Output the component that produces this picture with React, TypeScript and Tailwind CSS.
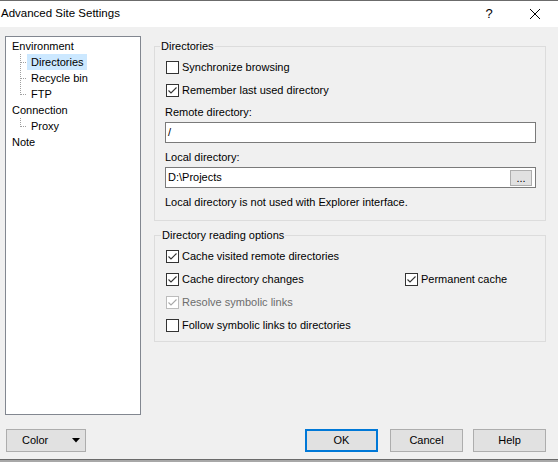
import React from 'react';

const font = { fontFamily: '"Liberation Sans", Arial, sans-serif' };

function CheckBox({ checked, disabled, label }: { checked?: boolean; disabled?: boolean; label: string }) {
  const edge = disabled ? 'border-[#bcbcbc]' : 'border-[#333333]';
  const mark = disabled ? '#a8a8a8' : '#333333';
  return (
    <div className="flex items-center h-[16px]">
      <span className={`ml-[1px] w-[13px] h-[13px] border ${edge} bg-white flex items-center justify-center shrink-0`}>
        {checked && (
          <svg width="11" height="11" viewBox="0 0 11 11">
            <path d="M1.5 5.5 L4 8 L9.5 2.5" fill="none" stroke={mark} strokeWidth="1.1" />
          </svg>
        )}
      </span>
      <span className={`ml-[3px] whitespace-nowrap ${disabled ? 'text-[#6d6d6d]' : 'text-black'}`}>{label}</span>
    </div>
  );
}

function Connector({ last }: { last?: boolean }) {
  return (
    <svg width="15" height="16" className="shrink-0" shapeRendering="crispEdges">
      <line x1="8.5" y1="0" x2="8.5" y2={last ? 8.5 : 16} stroke="#a0a0a0" strokeDasharray="1 1" />
      <line x1="9" y1="8.5" x2="15" y2="8.5" stroke="#a0a0a0" strokeDasharray="1 1" />
    </svg>
  );
}

function TreeChild({ label, last, selected }: { label: string; last?: boolean; selected?: boolean }) {
  return (
    <div className="flex items-center h-[16px]">
      <Connector last={last} />
      <span className={`h-[16px] leading-[16px] pl-[4px] pr-[3px] whitespace-nowrap ${selected ? 'bg-[#cce8ff]' : ''}`}>{label}</span>
    </div>
  );
}

function Btn({ children, primary, className }: { children: React.ReactNode; primary?: boolean; className?: string }) {
  return (
    <div
      className={`h-[23px] bg-[#e1e1e1] flex items-center justify-center ${primary ? 'border-2 border-[#0078d7]' : 'border border-[#adadad]'} ${className ?? ''}`}
    >
      {children}
    </div>
  );
}

export default function App() {
  return (
    <div className="w-[558px] h-[462px] bg-[#f0f0f0] text-[11px] text-black flex flex-col overflow-hidden" style={font}>
      <div className="h-[1px] bg-[#6b6b6b]" />
      <div className="h-[26px] bg-white flex items-center">
        <span className="pl-[1px] text-[11.5px]">Advanced Site Settings</span>
        <span className="ml-auto text-[13px] w-[12px] text-center">?</span>
        <svg width="12" height="12" className="ml-[34px] mr-[17px]" shapeRendering="geometricPrecision">
          <path d="M1 1 L11 11 M11 1 L1 11" stroke="#000" strokeWidth="1" />
        </svg>
      </div>

      <div className="flex items-start pt-[9px] pl-[5px]">
        <div className="w-[136px] h-[379px] bg-white border border-[#828790] pt-[1px] pl-[6px] leading-[16px]">
          <div className="h-[16px]">Environment</div>
          <TreeChild label="Directories" selected />
          <TreeChild label="Recycle bin" />
          <TreeChild label="FTP" last />
          <div className="h-[16px]">Connection</div>
          <TreeChild label="Proxy" last />
          <div className="h-[16px]">Note</div>
        </div>

        <div className="ml-[13px] w-[392px] pt-[2px] flex flex-col">
          <fieldset className="border border-[#dcdcdc] px-[10px] pr-[9px] pb-[10px]">
            <legend className="ml-[-5px] px-[1px] leading-[16px]">Directories</legend>
            <div className="mt-[5px]">
              <CheckBox label="Synchronize browsing" />
            </div>
            <div className="mt-[7px]">
              <CheckBox label="Remember last used directory" checked />
            </div>
            <div className="mt-[6px] leading-[16px]">Remote directory:</div>
            <div className="mt-[2px] h-[21px] bg-white border border-[#7a7a7a] flex items-center pl-[2px]">/</div>
            <div className="mt-[6px] leading-[16px]">Local directory:</div>
            <div className="mt-[2px] h-[21px] bg-white border border-[#7a7a7a] flex items-center pl-[2px]">
              <span>D:\Projects</span>
              <span className="ml-auto mr-[3px] w-[22px] h-[16px] bg-[#e1e1e1] border border-[#adadad] flex items-end justify-center text-[11px] leading-[12px] pb-[1px]">
                ...
              </span>
            </div>
            <div className="mt-[6px] leading-[16px]">Local directory is not used with Explorer interface.</div>
          </fieldset>

          <fieldset className="mt-[6px] border border-[#dcdcdc] px-[10px] pr-[9px] pb-[8px]">
            <legend className="ml-[-4px] px-[1px] leading-[16px]">Directory reading options</legend>
            <div className="mt-[5px]">
              <CheckBox label="Cache visited remote directories" checked />
            </div>
            <div className="mt-[7px] flex">
              <div className="w-[239px]">
                <CheckBox label="Cache directory changes" checked />
              </div>
              <CheckBox label="Permanent cache" checked />
            </div>
            <div className="mt-[7px]">
              <CheckBox label="Resolve symbolic links" checked disabled />
            </div>
            <div className="mt-[7px]">
              <CheckBox label="Follow symbolic links to directories" />
            </div>
          </fieldset>
        </div>
      </div>

      <div className="mt-[14px] flex items-center">
        <div className="ml-[6px] w-[80px] h-[23px] bg-[#e1e1e1] border border-[#adadad] flex items-center pl-[15px] pr-[5px]">
          <span>Color</span>
          <svg width="8" height="5" className="ml-auto">
            <path d="M0 0 L8 0 L4 4.5 Z" fill="#000" />
          </svg>
        </div>
        <Btn primary className="ml-[219px] w-[73px]">OK</Btn>
        <Btn className="ml-[12px] w-[73px]">Cancel</Btn>
        <Btn className="ml-[10px] w-[73px]">Help</Btn>
      </div>

      <div className="mt-auto h-[1px] bg-[#6a6a6a]" />
      <div className="h-[2px] bg-[#a8a8a8]" />
    </div>
  );
}
